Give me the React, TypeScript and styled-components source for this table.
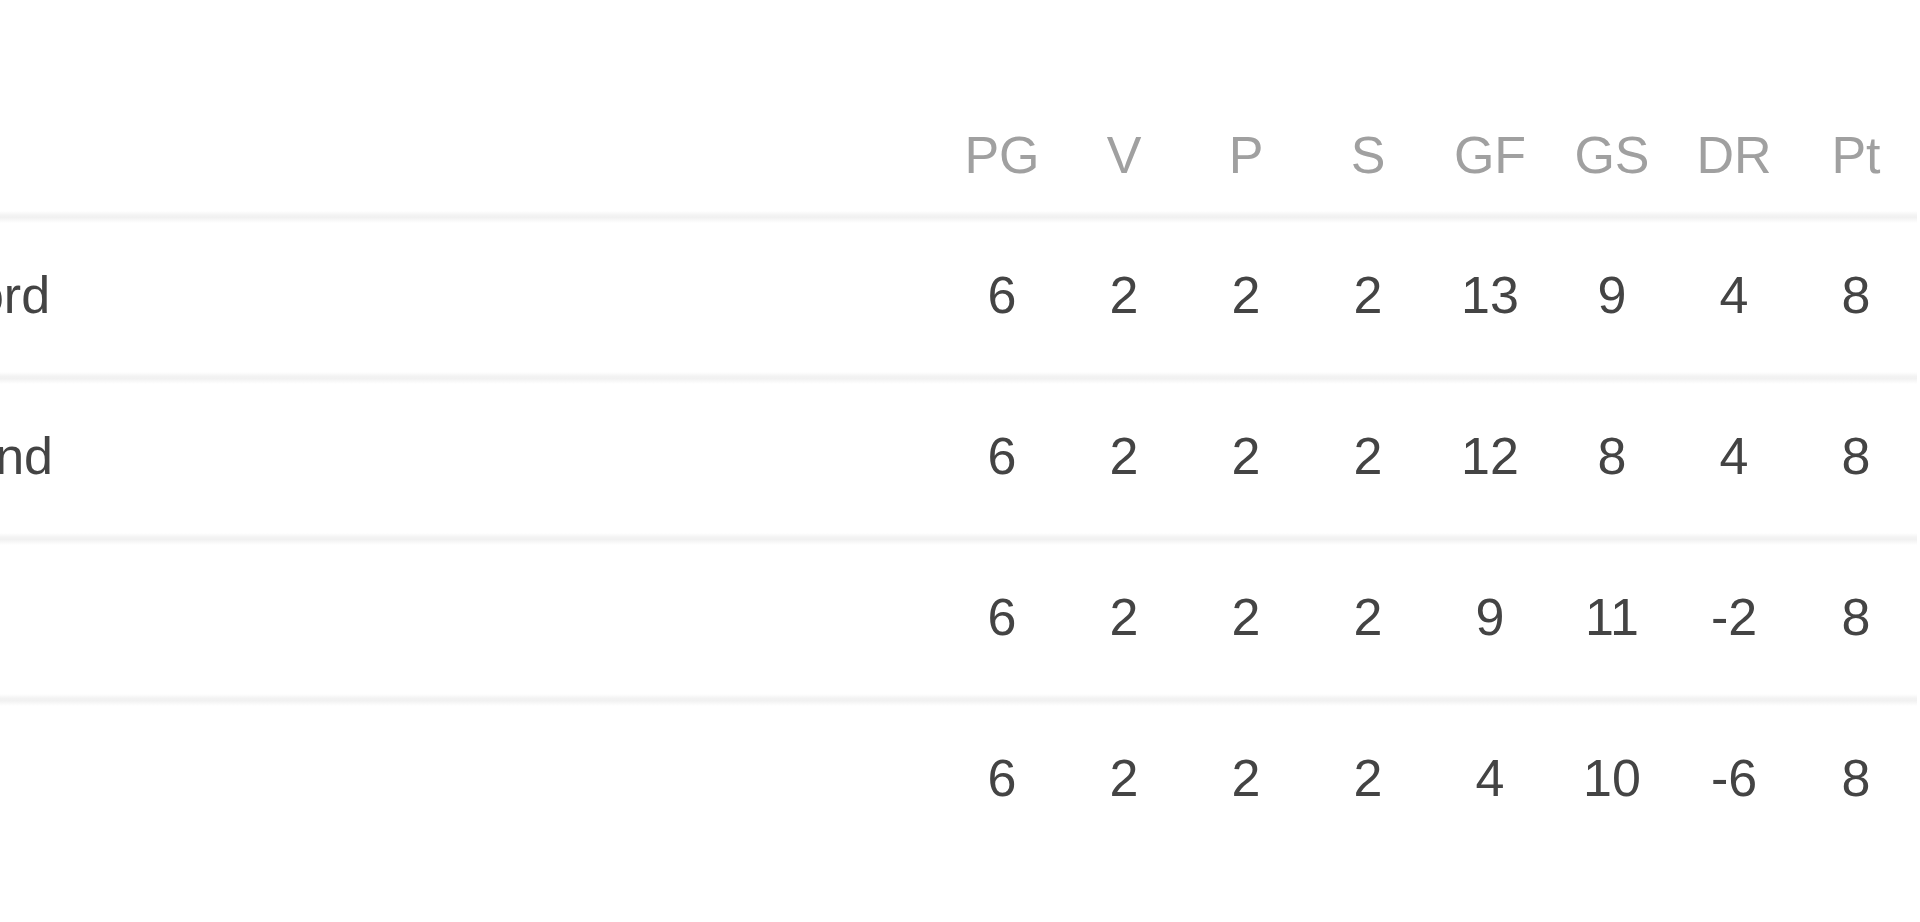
import styled, { createGlobalStyle } from "styled-components";

const GlobalStyle = createGlobalStyle`
  html, body {
    margin: 0;
    padding: 0;
    background: #ffffff;
    overflow: hidden;
  }
  body {
    font-family: "Liberation Sans", Arial, sans-serif;
  }
`;

const Page = styled.div`
  width: 1920px;
  height: 922px;
  overflow: hidden;
  background: #ffffff;
`;

// the standings table is wider than the viewport: team names start off screen
const Table = styled.div`
  margin-left: -106px;
  width: calc(100% + 106px);
  display: flex;
  flex-direction: column;
  padding-right: 3px;
  box-sizing: border-box;
`;

const HeaderRow = styled.div`
  display: flex;
  align-items: flex-end;
  height: 211px;
  padding-bottom: 30px;
  box-sizing: border-box;
`;

const Divider = styled.div`
  height: 12px;
  background: linear-gradient(
    to bottom,
    #ffffff 0%,
    #f3f3f3 35%,
    #f1f1f1 55%,
    #ffffff 100%
  );
`;

const Row = styled.div`
  display: flex;
  align-items: center;
  height: 149px;
  padding-bottom: 6px;
  box-sizing: border-box;
`;

const NameCell = styled.div`
  flex: 1;
  min-width: 0;
  font-size: 52px;
  line-height: 52px;
  color: #444444;
  white-space: nowrap;
`;

type CellProps = {
  $head?: boolean;
};

const Cell = styled.div<CellProps>`
  width: 122px;
  flex-shrink: 0;
  text-align: center;
  font-size: 52px;
  line-height: 52px;
  color: ${(props) => (props.$head ? "#a0a0a0" : "#444444")};
`;

const columns = ["PG", "V", "P", "S", "GF", "GS", "DR", "Pt"];

const teams = [
  { name: "Oxford", stats: [6, 2, 2, 2, 13, 9, 4, 8] },
  { name: "Ireland", stats: [6, 2, 2, 2, 12, 8, 4, 8] },
  { name: "Iraq", stats: [6, 2, 2, 2, 9, 11, -2, 8] },
  { name: "Iran", stats: [6, 2, 2, 2, 4, 10, -6, 8] },
];

function App() {
  return (
    <Page>
      <GlobalStyle />
      <Table>
        <HeaderRow>
          <NameCell />
          {columns.map((c) => (
            <Cell key={c} $head>
              {c}
            </Cell>
          ))}
        </HeaderRow>
        {teams.map((t) => (
          <div key={t.name}>
            <Divider />
            <Row>
              <NameCell>{t.name}</NameCell>
              {t.stats.map((s, i) => (
                <Cell key={i}>{s}</Cell>
              ))}
            </Row>
          </div>
        ))}
      </Table>
    </Page>
  );
}

export default App;
